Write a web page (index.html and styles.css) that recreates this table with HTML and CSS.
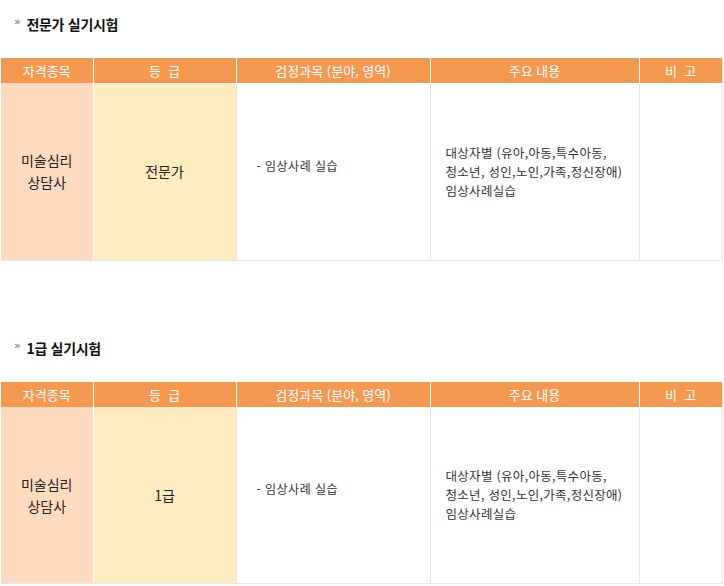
FILE: index.html
```html
<!DOCTYPE html>
<html lang="ko">
<head>
<meta charset="utf-8">
<link rel="stylesheet" href="styles.css">
</head>
<body>
<div class="page">
  <section class="sec">
    <h3 class="title"><span class="raquo">»</span>전문가 실기시험</h3>
    <table class="tbl">
      <colgroup>
        <col class="c1"><col class="c2"><col class="c3"><col class="c4"><col class="c5">
      </colgroup>
      <thead>
        <tr><th>자격종목</th><th>등 &nbsp;급</th><th>검정과목 (분야, 영역)</th><th>주요 내용</th><th>비 &nbsp;고</th></tr>
      </thead>
      <tbody>
        <tr class="row">
          <td class="kind">미술심리<br>상담사</td>
          <td class="grade">전문가</td>
          <td class="subj"><span class="lift">- 임상사례 실습</span></td>
          <td class="cont">대상자별 (유아,아동,특수아동,<br>청소년, 성인,노인,가족,정신장애)<br>임상사례실습</td>
          <td class="note"></td>
        </tr>
      </tbody>
    </table>
  </section>
  <section class="sec sec2">
    <h3 class="title"><span class="raquo">»</span>1급 실기시험</h3>
    <table class="tbl">
      <colgroup>
        <col class="c1"><col class="c2"><col class="c3"><col class="c4"><col class="c5">
      </colgroup>
      <thead>
        <tr><th>자격종목</th><th>등 &nbsp;급</th><th>검정과목 (분야, 영역)</th><th>주요 내용</th><th>비 &nbsp;고</th></tr>
      </thead>
      <tbody>
        <tr class="row">
          <td class="kind">미술심리<br>상담사</td>
          <td class="grade">1급</td>
          <td class="subj"><span class="lift">- 임상사례 실습</span></td>
          <td class="cont">대상자별 (유아,아동,특수아동,<br>청소년, 성인,노인,가족,정신장애)<br>임상사례실습</td>
          <td class="note"></td>
        </tr>
      </tbody>
    </table>
  </section>
</div>
</body>
</html>
```
FILE: styles.css
```css
html, body {
  margin: 0;
  padding: 0;
  background: #ffffff;
}
body {
  font-family: "Noto Sans CJK KR", "Noto Sans", sans-serif;
  color: #333;
}
.page {
  padding: 14px 0 0 1px;
  width: 721px;
}
.sec2 {
  margin-top: 77px;
}
.title {
  margin: 0 0 24px 0;
  height: 20px;
  line-height: 20px;
  font-size: 14px;
  font-weight: bold;
  color: #111;
  padding-left: 13px;
  letter-spacing: -0.3px;
  display: flex;
  align-items: center;
}
.raquo {
  font-family: "DejaVu Sans", sans-serif;
  font-weight: normal;
  font-size: 11px;
  color: #666;
  margin-right: 6px;
  position: relative;
  top: -2px;
}
.tbl {
  border-collapse: collapse;
  table-layout: fixed;
  width: 721px;
}
.c1 { width: 92px; }
.c2 { width: 143px; }
.c3 { width: 194px; }
.c4 { width: 209px; }
.c5 { width: 83px; }
.tbl th {
  background: #f49850;
  color: #fff;
  font-weight: normal;
  font-size: 13px;
  height: 25px;
  padding: 0;
  border-left: 1px solid #fff;
  border-right: 1px solid #fff;
  text-align: center;
  vertical-align: middle;
  line-height: 25px;
}
.tbl th:first-child { border-left: 0; }
.tbl th:last-child { border-right: 1px solid #e8e8e8; }
.row {
  height: 177px;
}
.tbl td {
  padding: 0;
  border: 1px solid #e8e8e8;
  border-top: 0;
  vertical-align: middle;
}
.tbl td.kind {
  background: #fedbbf;
  border-left: 0;
  border-right: 1px solid #fff;
  text-align: center;
  font-size: 14px;
  line-height: 22px;
  color: #222;
}
.tbl td.grade {
  background: #feebc0;
  border-left: 1px solid #fff;
  text-align: center;
  font-size: 14px;
  color: #222;
}
.tbl td.subj {
  padding-left: 20px;
  font-size: 12px;
  letter-spacing: 0.5px;
  color: #333;
}
.lift {
  position: relative;
  top: -6px;
}
.tbl td.cont {
  padding: 0 0 0 15px;
  font-size: 12.5px;
  line-height: 19px;
  color: #333;
  letter-spacing: 0.3px;
}
```
